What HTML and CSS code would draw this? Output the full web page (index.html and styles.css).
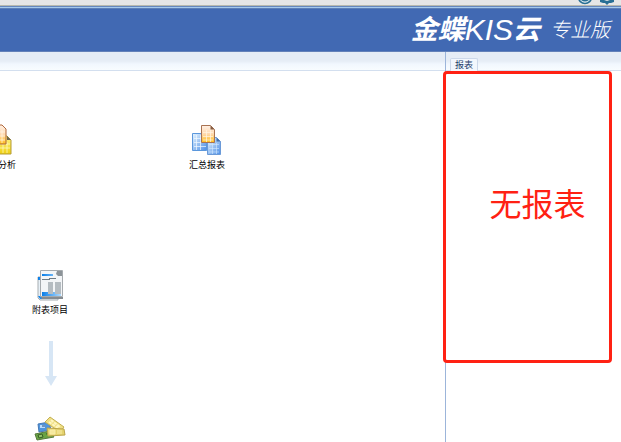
FILE: index.html
```html
<!DOCTYPE html>
<html lang="zh-CN">
<head>
<meta charset="utf-8">
<meta name="viewport" content="width=device-width, initial-scale=1">
<title>金蝶KIS云 专业版</title>
<link rel="stylesheet" href="styles.css">
</head>
<body>
<div class="toolbar">
  <svg class="tool" width="16" height="16" viewBox="0 0 16 16" aria-hidden="true"><circle cx="8" cy="8" r="6.5" fill="#e8f0f4" stroke="#286f95" stroke-width="1.6"/><path d="M4 11q4 3 8 0V9H4z" fill="#286f95"/></svg>
  <svg class="tool" width="16" height="16" viewBox="0 0 16 16" aria-hidden="true"><path d="M1 9h14v4l-3 1h-2l-2 2-2-2H4l-3-1z" fill="#286f95"/><path d="M5 9h6v2l-3 1-3-1z" fill="#e6e6e6"/></svg>
</div>
<header class="banner">
  <h1 class="brand"><span class="brand-cn">金蝶</span><span class="brand-kis">KIS</span><span class="brand-cn">云</span></h1>
  <span class="edition">专业版</span>
</header>
<div class="workspace">
  <main class="main">
    <div class="strip"></div>
    <div class="canvas">
      <a class="node node-analysis" href="#">
        <svg width="12" height="32" viewBox="0 0 12 32" aria-hidden="true">
          <defs>
            <linearGradient id="orange" x2="0" y2="1"><stop stop-color="#fff0e5"/><stop offset=".5" stop-color="#ffd9ae"/><stop offset="1" stop-color="#ffbe18"/></linearGradient>
            <linearGradient id="blue" x2="1" y2="1"><stop stop-color="#e8f6ff"/><stop offset="1" stop-color="#4d8ee6"/></linearGradient>
            <linearGradient id="yellow" x2="0" y2="1"><stop stop-color="#fff48c"/><stop offset="1" stop-color="#efd010"/></linearGradient>
          </defs>
          <path d="M-5 12H7l4 4v14H-5z" fill="url(#yellow)" stroke="#b59c38"/>
          <path d="M7 12v4h4z" fill="#6d654c"/>
          <path d="M0 20h10M0 24h10M3 18v11M7 18v11" stroke="#fffbd1" stroke-opacity=".7"/>
          <path d="M-8 1H2l4 4v15H-8z" fill="url(#orange)" stroke="#b0683c"/>
          <path d="M0 8h5M0 12h5M0 16h5M2 6v13" stroke="#fff7eb" stroke-opacity=".7"/>
        </svg>
        <span>分析</span>
      </a>
      <a class="node node-summary" href="#">
        <svg width="32" height="32" viewBox="0 0 32 32" aria-hidden="true">
          <path d="M1.500 9.500h14v17h-14z" fill="url(#blue)" stroke="#5b97dc"/>
          <path d="M3 14.500h12M3 18.500h12M3 22.500h12M5.500 11v15M9.500 11v15" stroke="#f2f9ff" stroke-opacity=".7"/>
          <path d="M16.500 13.500h9l4 4v13h-13z" fill="url(#blue)" stroke="#6b9ad8"/>
          <path d="M25.500 13.500v4h4z" fill="#4770a8"/>
          <path d="M18 20.500h10M18 24.500h10M18 28h10M21.500 19v11M25.500 19v11" stroke="#d4e9ff" stroke-opacity=".6"/>
          <path d="M10.500 1.500h9l4 4v13h-13z" fill="url(#orange)" stroke="#a97352"/>
          <path d="M19.500 1.500v4h4z" fill="#865d43"/>
          <path d="M12 8.500h10M12 12.500h10M12 16h10M15.500 6v12M19.500 6v12" stroke="#fff5e4" stroke-opacity=".7"/>
        </svg>
        <span>汇总报表</span>
      </a>
      <a class="node node-items" href="#">
        <svg width="32" height="32" viewBox="0 0 32 32" aria-hidden="true">
          <defs><linearGradient id="ink"><stop stop-color="#087de8"/><stop offset="1" stop-color="#b0dcff"/></linearGradient></defs>
          <path d="M4 8h20v23H6l-2-2z" fill="#e7f0f7" stroke="#a7adb1"/>
          <path d="M4 8h4v3H4zM4 27h19v3H6z" fill="url(#ink)"/>
          <path d="M6.500 1.500h22v26h-22z" fill="#f3f5f7" stroke="#a5aaae"/>
          <path d="M23 2h5v5h-4l-2-2z" fill="#8c9398"/>
          <path d="M8 5h11v2H8zM8 23h19v4H8z" fill="url(#ink)"/>
          <path d="M8 10h8v1H8zM15 9h7v1h-7z" fill="#6f7b84"/>
          <path d="M14 13h5v12h-5zM21 13h6v12h-6z" fill="#b5bcc1"/>
          <path d="M7 28h22v2H8z" fill="#858b90"/>
        </svg>
        <span>附表项目</span>
      </a>
      <svg class="arrow" width="12" height="45" viewBox="0 0 12 45" aria-hidden="true"><path d="M4 0h4v35h4L6 45 0 35h4z" fill="#d7e6f5"/></svg>
      <a class="node node-cash" href="#" aria-label="现金">
        <svg width="32" height="26" viewBox="0 0 32 26" aria-hidden="true">
          <path d="M4 8l11-2 2 8-12 2z" fill="#4f95dd" stroke="#4779b5"/>
          <path d="M6 9h5v3H6z" fill="#b9ddff"/><path d="M8 10h3" stroke="#244b7c"/>
          <path d="M1 18l15-3 4 6-17 3z" fill="#6aa343" stroke="#577b3f"/>
          <path d="M4 19l4-1 1 3-4 1zM12 18l4-1" fill="#91bf68" stroke="#345f26"/>
          <path d="M16 1l14 10-4 5L11 6z" fill="#efdf84" stroke="#c4b052"/>
          <path d="M17 4l9 7M15 6l9 6" stroke="#fff6c0" stroke-width="2" stroke-dasharray="3 1"/>
          <path d="M13 12l17 1 1 6-17 1z" fill="#e5d36f" stroke="#bca54a"/>
          <path d="M16 14h5v4h-5zM23 15h5M23 17h5" fill="#f6e99d" stroke="#f9edaa"/>
        </svg>
      </a>
    </div>
  </main>
  <aside class="reports">
    <div class="strip"><button class="tab" type="button">报表</button></div>
    <div class="note">无报表</div>
  </aside>
</div>
</body>
</html>
```
FILE: styles.css
```css
* { box-sizing: border-box; }

body {
  display: flex;
  flex-direction: column;
  min-height: 100vh;
  margin: 0;
  overflow: hidden;
  background: #fff;
  font-family: "Liberation Sans", "Noto Sans CJK SC", sans-serif;
}

.toolbar {
  display: flex;
  flex: none;
  align-items: flex-end;
  justify-content: flex-end;
  gap: 6px;
  height: 5px;
  padding-right: 6px;
  overflow: hidden;
  background: #e6e6e6;
}

.tool { flex: none; }

.banner {
  display: flex;
  flex: none;
  align-items: center;
  justify-content: flex-end;
  gap: 10px;
  height: 47px;
  padding: 2px 11px 0 0;
  border-top: 1px solid #b8b9ae;
  border-bottom: 1px solid #6482b9;
  background: linear-gradient(#6688bd 0 1px, #a5c9ed 1px 2px, #5d7eb7 2px 3px, #4169b3 3px);
  color: #fff;
  white-space: nowrap;
}

.brand {
  display: flex;
  align-items: center;
  margin: 0;
  font-style: italic;
  line-height: 32px;
}

.brand-cn {
  font-size: 27px;
  font-weight: 700;
}

.brand-kis {
  font-size: 30px;
  font-weight: 400;
}

.edition {
  font-size: 20px;
  font-style: italic;
  font-weight: 300;
  line-height: 32px;
}

.workspace {
  display: grid;
  flex: 1;
  grid-template-columns: 1fr 176px;
}

.main {
  display: flex;
  flex-direction: column;
  min-width: 0;
}

.strip {
  flex: none;
  height: 19px;
  padding: 6px 0 0 4px;
  border-bottom: 1px solid #d3dfef;
  background: linear-gradient(#e6edf6 0 9px, #f1f7fe 12px, #f8fcff);
}

.canvas {
  position: relative;
  flex: 1;
}

.node {
  position: absolute;
  display: flex;
  flex-direction: column;
  align-items: center;
  color: #000;
  font-size: 9px;
  line-height: 18px;
  text-decoration: none;
  white-space: nowrap;
}

.node-analysis {
  top: 53px;
  left: -2px;
}

.node-analysis svg { margin-right: 2px; }

.node-summary {
  top: 53px;
  left: 189px;
}

.node-items {
  top: 198px;
  left: 32px;
}

.arrow {
  position: absolute;
  top: 270px;
  left: 45px;
}

.node-cash {
  top: 345px;
  left: 34px;
}

.reports {
  position: relative;
  border-left: 1px solid #9cb5da;
}

.tab {
  display: block;
  height: 13px;
  padding: 0 4px;
  border: 1px solid #ccd8ea;
  border-bottom: 0;
  border-radius: 2px 2px 0 0;
  background: #f2f7fd;
  color: #243e6b;
  font-family: inherit;
  font-size: 9px;
  line-height: 13px;
}

.note {
  position: absolute;
  top: 19px;
  right: 9px;
  left: -3px;
  height: 292px;
  padding-left: 20px;
  border: 3px solid #ff2113;
  border-radius: 4px;
  color: #ff2113;
  font-size: 32px;
  line-height: 262px;
  text-align: center;
}
```
